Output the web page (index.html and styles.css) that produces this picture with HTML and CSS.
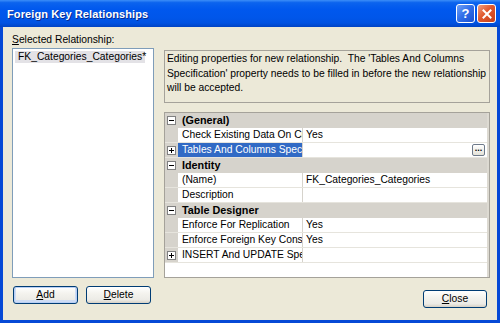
FILE: index.html
```html
<!DOCTYPE html>
<html>
<head>
<meta charset="utf-8">
<link rel="stylesheet" href="styles.css">
</head>
<body>
<div class="window">
  <div class="titlebar">
    <span class="title">Foreign Key Relationships</span>
    <div class="tbtns">
      <span class="tbtn help">?</span>
      <span class="tbtn close"><svg width="10" height="10" viewBox="0 0 10 10"><path d="M1.5 1.5 L8.5 8.5 M8.5 1.5 L1.5 8.5" stroke="#fff" stroke-width="2" stroke-linecap="square"/></svg></span>
    </div>
  </div>
  <div class="client">
    <div class="leftcol">
      <div class="label"><u>S</u>elected Relationship:</div>
      <div class="listbox"><div class="item">FK_Categories_Categories*</div></div>
      <div class="btnrow">
        <button class="btn default"><u>A</u>dd</button>
        <button class="btn"><u>D</u>elete</button>
      </div>
    </div>
    <div class="rightcol">
      <div class="desc">Editing properties for new relationship.&nbsp; The 'Tables And Columns<br>Specification' property needs to be filled in before the new relationship<br>will be accepted.</div>
      <div class="grid">
        <div class="row cat"><span class="gut"><svg class="box" width="9" height="9" viewBox="0 0 9 9"><rect x="0.5" y="0.5" width="8" height="8" fill="#fff" stroke="#808080"/><path d="M2 4.5 H7" stroke="#000"/></svg></span><span class="catname">(General)</span></div>
        <div class="row"><span class="gut"></span><span class="name">Check Existing Data On Creation Or Re-Enabling</span><span class="val">Yes</span></div>
        <div class="row"><span class="gut"><svg class="box" width="9" height="9" viewBox="0 0 9 9"><rect x="0.5" y="0.5" width="8" height="8" fill="#fff" stroke="#808080"/><path d="M2 4.5 H7 M4.5 2 V7" stroke="#000"/></svg></span><span class="name sel">Tables And Columns Specification</span><span class="val end"><span class="ell">...</span></span></div>
        <div class="row cat"><span class="gut"><svg class="box" width="9" height="9" viewBox="0 0 9 9"><rect x="0.5" y="0.5" width="8" height="8" fill="#fff" stroke="#808080"/><path d="M2 4.5 H7" stroke="#000"/></svg></span><span class="catname">Identity</span></div>
        <div class="row"><span class="gut"></span><span class="name">(Name)</span><span class="val">FK_Categories_Categories</span></div>
        <div class="row"><span class="gut"></span><span class="name">Description</span><span class="val"></span></div>
        <div class="row cat"><span class="gut"><svg class="box" width="9" height="9" viewBox="0 0 9 9"><rect x="0.5" y="0.5" width="8" height="8" fill="#fff" stroke="#808080"/><path d="M2 4.5 H7" stroke="#000"/></svg></span><span class="catname">Table Designer</span></div>
        <div class="row"><span class="gut"></span><span class="name">Enforce For Replication</span><span class="val">Yes</span></div>
        <div class="row"><span class="gut"></span><span class="name">Enforce Foreign Key Constraint</span><span class="val">Yes</span></div>
        <div class="row"><span class="gut"><svg class="box" width="9" height="9" viewBox="0 0 9 9"><rect x="0.5" y="0.5" width="8" height="8" fill="#fff" stroke="#808080"/><path d="M2 4.5 H7 M4.5 2 V7" stroke="#000"/></svg></span><span class="name">INSERT And UPDATE Specification</span><span class="val"></span></div>
      </div>
      <div class="footer">
        <button class="btn"><u>C</u>lose</button>
      </div>
    </div>
  </div>
</div>
</body>
</html>
```

FILE: styles.css
```css
html, body {
  margin: 0;
  padding: 0;
}
body {
  font-family: "Liberation Sans", Arial, sans-serif;
  font-size: 10.3px;
  color: #000;
}
.window {
  width: 500px;
  height: 323px;
  display: flex;
  flex-direction: column;
  background: #0649D6;
  box-sizing: border-box;
}
.titlebar {
  height: 27px;
  flex: none;
  display: flex;
  align-items: center;
  justify-content: space-between;
  padding: 0 4px 0 7px;
  background: linear-gradient(to bottom, #3C8EF8 0%, #0B63EE 10%, #0058EE 35%, #0056EA 65%, #0052E2 85%, #0043C4 100%);
}
.title {
  color: #fff;
  font-weight: bold;
  font-size: 11px;
  text-shadow: 1px 1px 0 #0A2C8E;
  letter-spacing: 0.1px;
}
.tbtns {
  display: flex;
  gap: 2px;
}
.tbtn {
  width: 17px;
  height: 17px;
  border: 1px solid #fff;
  border-radius: 3px;
  display: flex;
  align-items: center;
  justify-content: center;
  color: #fff;
  font-weight: bold;
  font-size: 13px;
}
.help {
  background: linear-gradient(135deg, #6FA0F7 0%, #2F6DE8 50%, #1A4FD0 100%);
}
.close {
  background: linear-gradient(135deg, #F0A080 0%, #E0582E 45%, #C5401C 100%);
}
.client {
  flex: 1;
  margin: 0 3px 3px 3px;
  background: #ECE9D8;
  display: flex;
  gap: 10px;
  padding: 6px 7px 0 9px;
}
.leftcol {
  width: 142px;
  display: flex;
  flex-direction: column;
}
.label {
  height: 14px;
  line-height: 14px;
}
.listbox {
  margin-top: 1px;
  height: 230px;
  box-sizing: border-box;
  background: #fff;
  border: 1px solid #7F9DB9;
  padding: 2px;
}
.item {
  background: #E3E2E6;
  height: 12px;
  line-height: 12px;
  padding: 0 3px;
  display: inline-block;
  width: 124px;
  white-space: nowrap;
}
.btnrow {
  display: flex;
  gap: 8px;
  margin-top: 8px;
  padding-left: 1px;
}
.btn {
  width: 65px;
  height: 18px;
  box-sizing: border-box;
  border: 1px solid #003C74;
  border-radius: 3px;
  background: linear-gradient(to bottom, #FFFFFF 0%, #F4F3EE 40%, #ECEBE6 80%, #D6D0C5 100%);
  font-family: "Liberation Sans", Arial, sans-serif;
  font-size: 10.3px;
  color: #000;
  padding: 0;
  line-height: 14px;
}
.btn.default {
  box-shadow: inset 0 0 0 1px #B8CFF5, inset 0 -1px 0 2px #CEDCF4;
}
.rightcol {
  width: 326px;
  display: flex;
  flex-direction: column;
}
.desc {
  margin-top: 17px;
  height: 53px;
  box-sizing: border-box;
  border: 1px solid #A5A29A;
  padding: 1px 2px;
  line-height: 14.5px;
  white-space: nowrap;
}
.grid {
  margin-top: 9px;
  height: 166px;
  box-sizing: border-box;
  border: 1px solid #A5A29A;
  background: #fff;
  padding-right: 2px;
  box-shadow: inset -2px 0 0 #DDDAD2;
}
.row {
  height: 15px;
  box-sizing: border-box;
  display: flex;
  border-bottom: 1px solid #E6E4DD;
  line-height: 14px;
  white-space: nowrap;
}
.gut {
  width: 13px;
  flex: none;
  background: #D6D3CC;
  display: flex;
  align-items: center;
  justify-content: center;
}
.row.cat {
  background: #D6D3CC;
  border-bottom-color: #D6D3CC;
  font-weight: bold;
}
.catname {
  padding-left: 4px;
  font-size: 10.8px;
}
.name {
  width: 125px;
  flex: none;
  overflow: hidden;
  text-overflow: clip;
  padding-left: 4px;
  box-sizing: border-box;
  border-right: 1px solid #D6D3CC;
}
.name.sel {
  background: #316AC5;
  color: #fff;
}
.val {
  flex: 1;
  padding-left: 3px;
  display: flex;
  align-items: center;
}
.val.end {
  justify-content: flex-end;
}
.ell {
  width: 13px;
  height: 12px;
  box-sizing: border-box;
  border: 1px solid #6E7A8A;
  border-radius: 2px;
  background: linear-gradient(#FFFFFF, #E4E2D8);
  font-size: 9px;
  line-height: 7px;
  text-align: center;
  font-weight: bold;
  margin-right: 2px;
  color: #000;
}
.footer {
  display: flex;
  justify-content: flex-end;
  margin-top: 12px;
  padding-right: 3px;
}
.footer .btn {
  width: 64px;
}
```
